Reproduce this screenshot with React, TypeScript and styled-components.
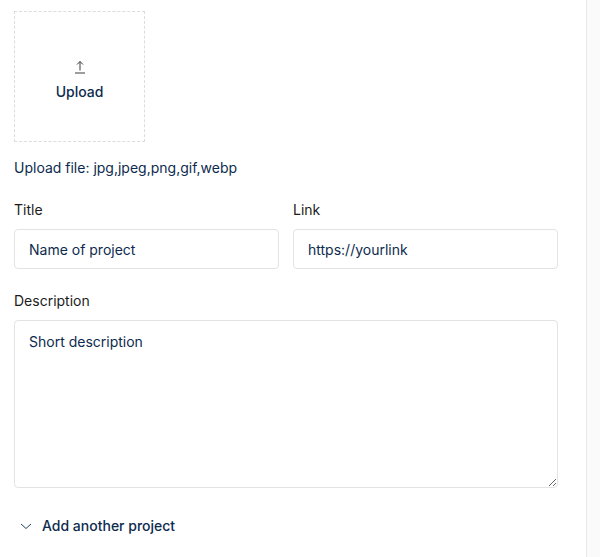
import React from 'react';
import styled, { createGlobalStyle } from 'styled-components';

const GlobalStyle = createGlobalStyle`
  html, body {
    margin: 0;
    padding: 0;
    background: #ffffff;
    font-family: Inter, "Noto Sans", sans-serif;
  }
`;

const Page = styled.div`
  display: flex;
  width: 600px;
  height: 557px;
  overflow: hidden;
`;

const Main = styled.div`
  flex: 1;
  padding: 11px 28px 0 14px;
  display: flex;
  flex-direction: column;
`;

const SidePanel = styled.div`
  width: 13px;
  background: #fafafa;
  border-left: 1px solid #e9e9e9;
`;

const UploadBox = styled.button`
  width: 131px;
  height: 131px;
  border: 1px dashed #dcdcdc;
  background: #fff;
  display: flex;
  flex-direction: column;
  align-items: center;
  justify-content: center;
  gap: 9px;
  padding: 0;
  cursor: pointer;
  font-family: inherit;
  font-size: 14px;
  font-weight: 500;
  color: #0d2b4e;
`;

const UploadIcon = styled.svg`
  width: 12px;
  height: 14px;
  margin-top: 6px;
`;

const Hint = styled.p`
  margin: 17px 0 0;
  font-size: 14px;
  color: #0d2b4e;
  line-height: 18px;
`;

const Row = styled.div`
  display: grid;
  grid-template-columns: 1fr 1fr;
  gap: 14px;
  margin-top: 24px;
`;

const Field = styled.label<{ $top?: number }>`
  display: flex;
  flex-direction: column;
  gap: 10px;
  margin-top: ${p => p.$top ?? 0}px;
`;

const Label = styled.span`
  font-size: 14px;
  line-height: 18px;
  color: #1c1c1c;
`;

const Input = styled.input`
  box-sizing: border-box;
  height: 40px;
  border: 1px solid #e3e3e3;
  border-radius: 4px;
  padding: 0 14px;
  font-family: inherit;
  font-size: 14px;
  color: #0d2b4e;
  outline: none;
  &::placeholder {
    color: #0d2b4e;
  }
`;

const TextArea = styled.textarea`
  box-sizing: border-box;
  height: 168px;
  border: 1px solid #e3e3e3;
  border-radius: 4px;
  padding: 12px 14px;
  font-family: inherit;
  font-size: 14px;
  line-height: 18px;
  color: #0d2b4e;
  outline: none;
  resize: vertical;
  &::placeholder {
    color: #0d2b4e;
  }
`;

const AddMore = styled.button`
  display: flex;
  align-items: center;
  gap: 10px;
  margin-top: 29px;
  padding: 0 0 0 6px;
  border: none;
  background: none;
  cursor: pointer;
  font-family: inherit;
  font-size: 14px;
  font-weight: 500;
  color: #0d2b4e;
  align-self: flex-start;
`;

export default function App() {
  return (
    <>
      <GlobalStyle />
      <Page>
        <Main>
          <UploadBox type="button">
            <UploadIcon viewBox="0 0 12 14" fill="none" stroke="#3a3a3a" strokeWidth="1">
              <path d="M6 10.5V1.5M3 4.5L6 1.5L9 4.5" />
              <path d="M1 13H11" />
            </UploadIcon>
            Upload
          </UploadBox>
          <Hint>Upload file: jpg,jpeg,png,gif,webp</Hint>
          <Row>
            <Field>
              <Label>Title</Label>
              <Input placeholder="Name of project" />
            </Field>
            <Field>
              <Label>Link</Label>
              <Input placeholder="https://yourlink" />
            </Field>
          </Row>
          <Field $top={23}>
            <Label>Description</Label>
            <TextArea placeholder="Short description" />
          </Field>
          <AddMore type="button">
            <svg width="12" height="8" viewBox="0 0 12 8" fill="none" stroke="#0d2b4e" strokeWidth="0.9">
              <path d="M1 2L6 6.5L11 2" />
            </svg>
            Add another project
          </AddMore>
        </Main>
        <SidePanel />
      </Page>
    </>
  );
}
